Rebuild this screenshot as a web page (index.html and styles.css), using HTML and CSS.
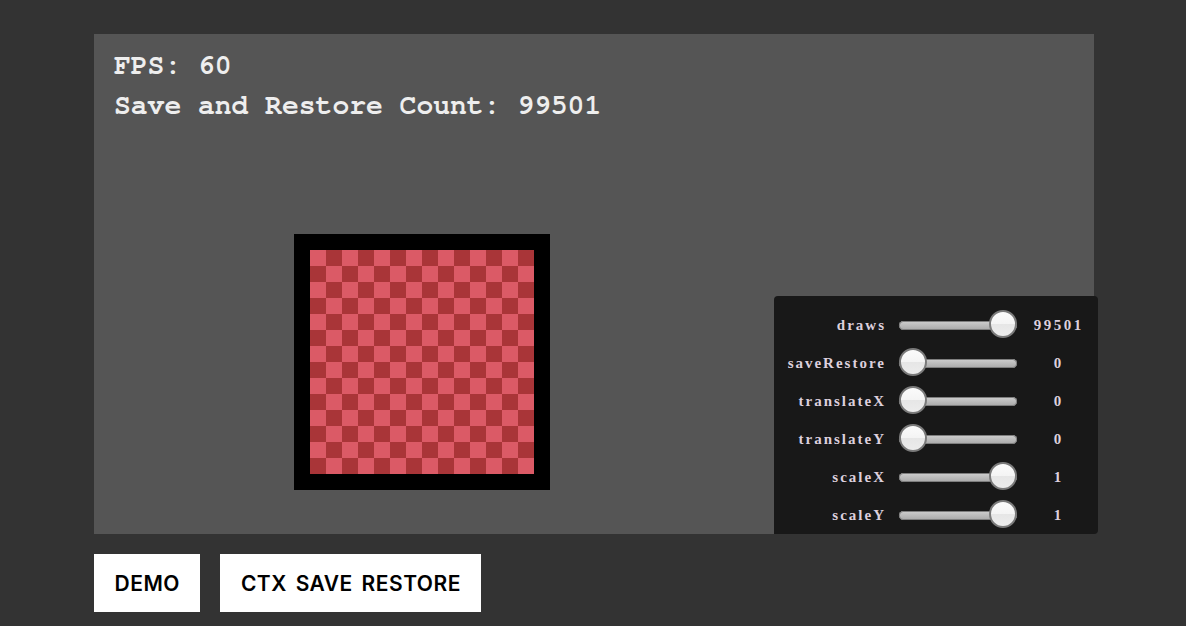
FILE: index.html
```html
<!DOCTYPE html>
<html>
<head>
<meta charset="utf-8">
<link rel="stylesheet" href="styles.css">
</head>
<body>
<div class="page">
  <div class="stage">
    <div class="hud">
      <div class="hud-line">FPS: 60</div>
      <div class="hud-line">Save and Restore Count: 99501</div>
    </div>
    <div class="board-wrap">
      <div class="board"><div class="checker"></div></div>
    </div>
    <div class="gui">
      <div class="row"><span class="label">draws</span><div class="track"><div class="thumb thumb-max"></div></div><span class="val">99501</span></div>
      <div class="row"><span class="label">saveRestore</span><div class="track"><div class="thumb thumb-min"></div></div><span class="val">0</span></div>
      <div class="row"><span class="label">translateX</span><div class="track"><div class="thumb thumb-min"></div></div><span class="val">0</span></div>
      <div class="row"><span class="label">translateY</span><div class="track"><div class="thumb thumb-min"></div></div><span class="val">0</span></div>
      <div class="row"><span class="label">scaleX</span><div class="track"><div class="thumb thumb-max"></div></div><span class="val">1</span></div>
      <div class="row"><span class="label">scaleY</span><div class="track"><div class="thumb thumb-max"></div></div><span class="val">1</span></div>
    </div>
  </div>
  <div class="buttons">
    <a class="btn">DEMO</a>
    <a class="btn">CTX SAVE RESTORE</a>
  </div>
</div>
</body>
</html>
```
FILE: styles.css
```css
html, body {
  margin: 0;
  padding: 0;
  background: #333333;
  height: 100%;
  overflow: hidden;
}
.page {
  padding: 34px 0 0 94px;
}
.stage {
  position: relative;
  width: 1000px;
  height: 500px;
  background: #555555;
}
.hud {
  position: absolute;
  left: 20px;
  top: 12px;
  font-family: "Nimbus Mono PS", "FreeMono", "Courier New", "Liberation Mono", monospace;
  font-weight: bold;
  font-size: 28px;
  line-height: 40px;
  color: #eeeeee;
}
.board-wrap {
  position: absolute;
  left: 200px;
  top: 200px;
}
.board {
  width: 224px;
  height: 224px;
  padding: 16px;
  background: #000;
}
.checker {
  width: 224px;
  height: 224px;
  background: repeating-conic-gradient(#a93538 0 25%, #db5a66 0 50%) 0 0 / 32px 32px;
}
.gui {
  position: absolute;
  left: 680px;
  top: 262px;
  width: 302px;
  height: 228px;
  padding: 10px 12px 0 10px;
  background: #181818;
  border-radius: 4px 4px 4px 0;
}
.row {
  height: 38px;
  display: grid;
  grid-template-columns: 100px 118px 60px;
  column-gap: 15px;
  align-items: center;
}
.row .val { margin-left: -6.5px; }
.label {
  font-family: "Liberation Serif", "Times New Roman", serif;
  font-weight: bold;
  font-size: 15px;
  letter-spacing: 2px;
  color: #ddd0dd;
  text-align: right;
  margin-right: -2px;
}
.val {
  font-family: "Liberation Serif", "Times New Roman", serif;
  font-weight: bold;
  font-size: 15px;
  letter-spacing: 2.5px;
  color: #ddd0dd;
  text-align: center;
}
.track {
  position: relative;
  height: 9px;
  border-radius: 5px;
  background: linear-gradient(#cfcfcf, #a8a8a8);
  box-shadow: inset 0 0 0 1px #7e7e7e;
}
.thumb {
  position: absolute;
  top: -11px;
  width: 24px;
  height: 24px;
  border-radius: 50%;
  background: linear-gradient(#fbfbfb 0%, #f4f4f4 50%, #e6e6e6 51%, #ececec 100%);
  border: 2px solid #7a7a7a;
}
.thumb-min { left: 0; }
.thumb-max { right: 0; }
.buttons {
  display: flex;
  gap: 20px;
  margin-top: 20px;
}
.btn {
  display: flex;
  align-items: center;
  height: 58px;
  padding: 0 20.5px;
  background: #ffffff;
  color: #000;
  font-family: Inter, "Liberation Sans", sans-serif;
  font-weight: 600;
  font-size: 21px;
  letter-spacing: 0.5px;
  word-spacing: 3px;
}
```
